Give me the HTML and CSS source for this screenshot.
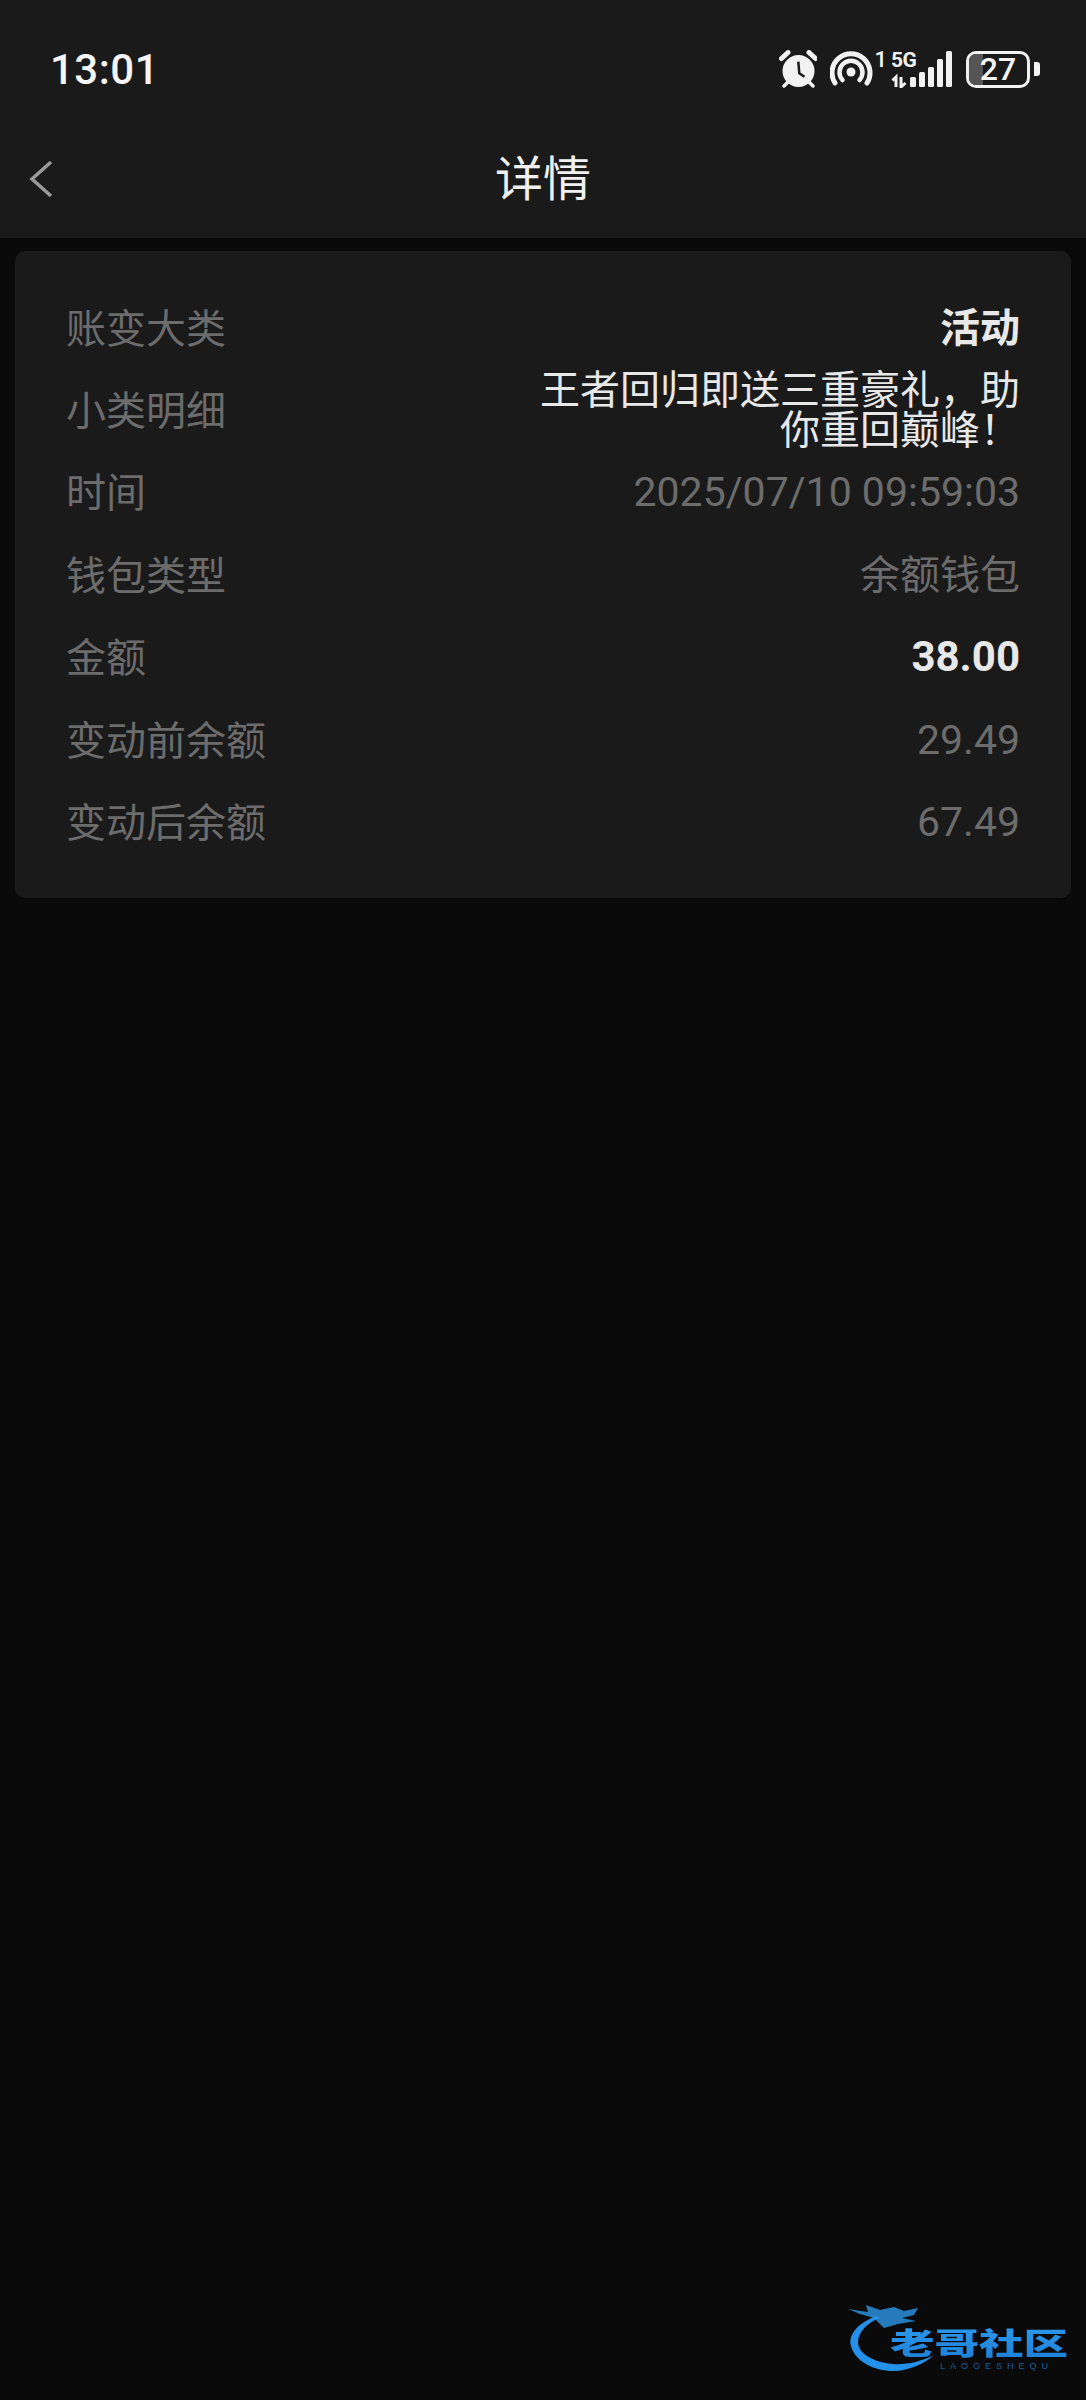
FILE: index.html
```html
<!DOCTYPE html>
<html lang="zh-CN">
  <head>
    <meta charset="utf-8" />
    <title>详情</title>
    <link rel="stylesheet" href="styles.css">
  </head>

  <body>
    <div class="topbar">
      <div class="statusbar">
        <div class="clock">13:01</div>
        <div class="status-icons">
          <svg class="icon-alarm" width="38" height="38" viewBox="0 0 38 38">
            <circle cx="19.500" cy="21" r="16" fill="#f2f2f2"/>
            <path d="M2.500 8.500 L9 2.500 M36.500 8.500 L30 2.500" stroke="#f2f2f2" stroke-width="5" stroke-linecap="round"/>
            <path d="M5 36 L9 32 M34 36 L30 32" stroke="#f2f2f2" stroke-width="3.500" stroke-linecap="round"/>
            <path d="M19.300 11.700 L20.300 23.300 L25.500 26.700" fill="none" stroke="#1a1a1a" stroke-width="2.500"/>
          </svg>
          <div class="hotspot">
            <svg width="43" height="38" viewBox="0 0 43 38">
              <path d="M5 33 A19 19 0 1 1 37 33" fill="none" stroke="#f2f2f2" stroke-width="5" stroke-linecap="round"/>
              <path d="M12.500 30 A11.500 11.500 0 1 1 29.500 30" fill="none" stroke="#f2f2f2" stroke-width="4.500" stroke-linecap="round"/>
              <circle cx="21" cy="22" r="4.500" fill="#f2f2f2"/>
            </svg>
            <span class="sim-num">1</span>
          </div>
          <div class="signal">
            <span class="net-label">5G</span>
            <svg width="62" height="38" viewBox="0 0 62 38">
              <path d="M5 37 V27 L1.500 30.500 M10 27 V37 L14.500 33" fill="none" stroke="#f2f2f2" stroke-width="3"/>
              <rect x="19" y="27" width="6" height="10" rx="1.500" fill="#f2f2f2"/>
              <rect x="28" y="22" width="6" height="15" rx="1.500" fill="#f2f2f2"/>
              <rect x="37" y="17" width="6" height="20" rx="1.500" fill="#f2f2f2"/>
              <rect x="46" y="9" width="6" height="28" rx="1.500" fill="#f2f2f2"/>
              <rect x="55" y="1" width="6" height="36" rx="1.500" fill="#f2f2f2"/>
            </svg>
          </div>
          <div class="battery">
            <div class="battery-body">
              <div class="battery-fill"></div>
              <span class="battery-num">27</span>
            </div>
            <div class="battery-nub"></div>
          </div>
        </div>
      </div>
      <div class="navbar">
        <svg class="back" width="24" height="38" viewBox="0 0 24 38">
          <path d="M22 2 L3 19 L22 36" fill="none" stroke="#9a9a9a" stroke-width="3.500"/>
        </svg>
        <div class="nav-title">详情</div>
      </div>
    </div>

    <div class="card">
      <div class="row"><span class="label">账变大类</span><span class="value strong">活动</span></div>
      <div class="row"><span class="label">小类明细</span><span class="value light">王者回归即送三重豪礼，助你重回巅峰！</span></div>
      <div class="row"><span class="label">时间</span><span class="value num">2025/07/10 09:59:03</span></div>
      <div class="row"><span class="label">钱包类型</span><span class="value">余额钱包</span></div>
      <div class="row"><span class="label">金额</span><span class="value num amount">38.00</span></div>
      <div class="row"><span class="label">变动前余额</span><span class="value num">29.49</span></div>
      <div class="row"><span class="label">变动后余额</span><span class="value num">67.49</span></div>
    </div>

    <svg class="watermark" width="226" height="72" viewBox="0 0 226 72">
      <defs>
        <linearGradient id="wm" x1="0" y1="0" x2="0" y2="1">
          <stop offset="0" stop-color="#2f9cf0"/>
          <stop offset="1" stop-color="#1c7fd6"/>
        </linearGradient>
      </defs>
      <path d="M30 12 C10 20 2 32 5 42 C9 58 30 68 50 67 C64 66 78 60 88 51 C74 58 60 61 46 60 C28 58 12 50 12 38 C12 28 22 18 34 14 Z" fill="#2391ea"/>
      <path d="M2 5 L22 8 L20 1 L34 6 L48 3 L58 7 L72 4 L68 11 L56 14 L70 17 L52 20 L38 24 L28 14 L14 10 Z" fill="#2c8fdd" opacity="0.85"/>
      <text class="wm-title" x="44" y="49.500" textLength="178" lengthAdjust="spacingAndGlyphs" fill="url(#wm)">老哥社区</text>
      <text class="wm-sub" x="94" y="65" textLength="108">LAOGESHEQU</text>
    </svg>
  </body>
</html>
```

FILE: styles.css
```css
html, body {
  margin: 0;
  padding: 0;
}

body {
  position: relative;
  width: 1086px;
  height: 2400px;
  overflow: hidden;
  background-color: #0a0a0a;
  font-family: "Noto Sans CJK SC", "Roboto", sans-serif;
}

.topbar {
  height: 238px;
  background-color: #1a1a1a;
}

.statusbar {
  display: flex;
  justify-content: space-between;
  align-items: center;
  height: 138px;
  padding: 0 46px 0 50px;
}

.clock {
  color: #f5f5f5;
  font-family: "Roboto", sans-serif;
  font-size: 42px;
  font-weight: 500;
  letter-spacing: 0.5px;
}

.status-icons {
  display: flex;
  align-items: center;
  gap: 13px;
}

.status-icons svg {
  display: block;
}

.hotspot {
  display: flex;
  align-items: flex-start;
  gap: 1px;
  height: 38px;
  margin-right: -9px;
}

.sim-num {
  color: #f2f2f2;
  font-family: "Roboto", sans-serif;
  font-size: 22px;
  font-weight: 500;
  line-height: 20px;
}

.signal {
  position: relative;
}

.net-label {
  position: absolute;
  left: 0;
  top: 1px;
  color: #f2f2f2;
  font-family: "Roboto", sans-serif;
  font-size: 21px;
  font-weight: 700;
  line-height: 18px;
  letter-spacing: -0.5px;
}

.battery {
  display: flex;
  align-items: center;
  gap: 4px;
}

.battery-body {
  position: relative;
  display: flex;
  justify-content: center;
  align-items: center;
  box-sizing: border-box;
  width: 64px;
  height: 37px;
  border: 3px solid #f2f2f2;
  border-radius: 10px;
  overflow: hidden;
}

.battery-fill {
  position: absolute;
  left: 0;
  top: 0;
  bottom: 0;
  width: 14px;
  background-color: #555555;
}

.battery-num {
  position: relative;
  color: #f5f5f5;
  font-family: "Roboto", sans-serif;
  font-size: 32px;
  font-weight: 500;
  line-height: 31px;
}

.battery-nub {
  width: 6px;
  height: 14px;
  background-color: #f2f2f2;
  border-radius: 0 3px 3px 0;
}

.navbar {
  position: relative;
  display: flex;
  justify-content: center;
  align-items: center;
  height: 80px;
}

.back {
  position: absolute;
  left: 29px;
  top: 22px;
}

.nav-title {
  padding-bottom: 5px;
  color: #f0f0f0;
  font-size: 48px;
  line-height: 75px;
}

.card {
  box-sizing: border-box;
  width: 1056px;
  height: 647px;
  margin: 13px 15px 0;
  padding: 35px 51px 35px;
  background-color: #1a1a1a;
  border-radius: 10px;
}

.row {
  display: flex;
  justify-content: space-between;
  align-items: center;
  height: 82.4px;
}

.label {
  padding-bottom: 3px;
  color: #6c6c6c;
  font-size: 40px;
  line-height: 40px;
}

.value {
  max-width: 480px;
  padding-bottom: 5px;
  color: #6c6c6c;
  font-size: 40px;
  line-height: 40px;
  text-align: right;
}

.value.num {
  padding-top: 1px;
  padding-bottom: 0;
  font-family: "Roboto", "Noto Sans CJK SC", sans-serif;
  font-size: 41px;
}

.value.strong {
  color: #e8e8e8;
  font-weight: 700;
}

.value.amount {
  color: #e8e8e8;
  font-size: 42px;
  font-weight: 700;
}

.value.light {
  color: #e8e8e8;
}

.watermark {
  position: absolute;
  left: 846px;
  top: 2304px;
  filter: blur(0.4px);
}

.wm-title {
  font-family: "Noto Sans CJK SC", sans-serif;
  font-size: 30px;
  font-weight: 900;
}

.wm-sub {
  fill: #1a5f9e;
  font-family: "Liberation Sans", sans-serif;
  font-size: 9px;
}
```
